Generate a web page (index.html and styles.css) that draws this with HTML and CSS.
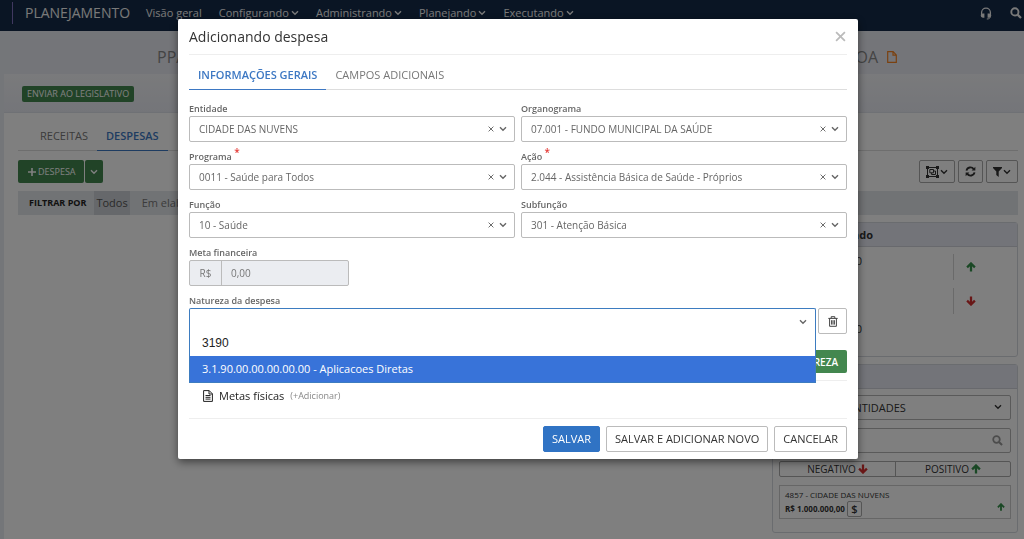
FILE: index.html
```html
<!DOCTYPE html>
<html lang="pt-BR">
<head>
<meta charset="utf-8">
<title>Planejamento</title>
<link rel="stylesheet" href="styles.css">
</head>
<body>
<svg class="sprite" aria-hidden="true">
  <symbol id="chevron" viewBox="0 0 8 6"><path d="M1 1.3 4 4.3 7 1.3" fill="none" stroke="currentColor" stroke-width="1.4"/></symbol>
  <symbol id="times" viewBox="0 0 10 10"><path d="M1 1 9 9M9 1 1 9" fill="none" stroke="currentColor" stroke-width="1.6"/></symbol>
  <symbol id="up" viewBox="0 0 10 10"><path d="M5 9.6V2M1.1 5.4 5 1.5 8.9 5.4" fill="none" stroke="currentColor" stroke-width="2.3"/></symbol>
  <symbol id="down" viewBox="0 0 10 10"><path d="M5 .4V8M1.1 4.6 5 8.5 8.9 4.6" fill="none" stroke="currentColor" stroke-width="2.3"/></symbol>
  <symbol id="search" viewBox="0 0 12 12"><circle cx="4.9" cy="4.9" r="3.6" fill="none" stroke="currentColor" stroke-width="1.9"/><path d="M7.6 7.6 11 11" stroke="currentColor" stroke-width="2.2"/></symbol>
</svg>

<header class="topbar">
  <span class="brand-edge"></span>
  <span class="product">PLANEJAMENTO</span>
  <nav class="menu">
    <a href="#">Visão geral</a>
    <a href="#">Configurando <svg class="chev"><use href="#chevron"/></svg></a>
    <a href="#">Administrando <svg class="chev"><use href="#chevron"/></svg></a>
    <a href="#">Planejando <svg class="chev"><use href="#chevron"/></svg></a>
    <a href="#">Executando <svg class="chev"><use href="#chevron"/></svg></a>
  </nav>
  <div class="top-actions">
    <button type="button" aria-label="Suporte"><svg width="12" height="13" viewBox="0 0 12 13"><path d="M1.6 8V5.6a4.4 4.4 0 0 1 8.8 0V8" fill="none" stroke="currentColor" stroke-width="1.3"/><path d="M2.8 6.5h1.6v4.2H2.8A2 2 0 0 1 2.8 6.5ZM9.2 6.5H7.6v4.2h1.6a2 2 0 0 0 0-4.2Z" fill="currentColor"/><path d="M10.2 9.8c0 1.6-1.2 2.2-3.4 2.2" fill="none" stroke="currentColor"/></svg></button>
    <button type="button" aria-label="Pesquisar"><svg width="12" height="12"><use href="#search"/></svg></button>
  </div>
</header>

<main class="page">
  <div class="plan-title">
    <span>PPA</span>
    <span class="plan-end">LOA <svg width="10" height="12" viewBox="0 0 10 12"><path d="M.7.7h5.4l3.2 3.2v7.4H.7ZM6 .7v3.4h3.3" fill="none" stroke="#f58220" stroke-width="1.2"/></svg></span>
  </div>
  <div class="plan-actions"><button type="button" class="green send">ENVIAR AO LEGISLATIVO</button></div>

  <section class="content">
    <nav class="tabs page-tabs">
      <a href="#">RECEITAS</a>
      <a href="#" class="active">DESPESAS</a>
    </nav>
    <div class="toolbar">
      <div class="split">
        <button type="button" class="green add"><svg width="8" height="8" viewBox="0 0 8 8"><path d="M4 0v8M0 4h8" stroke="currentColor" stroke-width="1.6"/></svg>DESPESA</button>
        <button type="button" class="green more" aria-label="Mais opções"><svg class="chev"><use href="#chevron"/></svg></button>
      </div>
      <div class="tools">
        <button type="button" class="tool" aria-label="Agrupar"><svg width="13" height="12" viewBox="0 0 13 12"><path d="M1.5 1.5h10v9h-10Z" fill="none" stroke="currentColor"/><path d="M0 0h3v3H0ZM10 0h3v3h-3ZM0 9h3v3H0ZM10 9h3v3h-3Z" fill="currentColor"/><path d="M3.8 3.5h3.7v3.3H3.8ZM7.5 5h2v3.5H5.6V7" fill="none" stroke="currentColor"/></svg><svg class="chev"><use href="#chevron"/></svg></button>
        <button type="button" class="tool" aria-label="Atualizar"><svg width="11" height="11" viewBox="0 0 12 12"><path d="M1.6 5A4.4 4.4 0 0 1 9.5 3.4M10.4 7A4.4 4.4 0 0 1 2.5 8.6" fill="none" stroke="currentColor" stroke-width="2"/><path d="M11.3.7v4.1H7.2ZM.7 11.3V7.2h4.1Z" fill="currentColor"/></svg></button>
        <button type="button" class="tool" aria-label="Filtrar"><svg width="9" height="10" viewBox="0 0 9 10"><path d="M0 0h9v1L5.7 4.6V10L3.3 8V4.6L0 1Z" fill="currentColor"/></svg><svg class="chev"><use href="#chevron"/></svg></button>
      </div>
    </div>
    <div class="filterbar">
      <strong>FILTRAR POR</strong>
      <a href="#" class="on">Todos</a>
      <a href="#">Em elaboração</a>
    </div>

    <aside class="side">
      <section class="panel">
        <h2><span>Planejado</span></h2>
        <div class="totals">
          <div class="total"><span>0,00</span></div>
          <div class="trend"><i><svg class="green-ink"><use href="#up"/></svg></i><i><svg class="red-ink"><use href="#down"/></svg></i></div>
          <div class="total last"><span>0,00</span></div>
        </div>
      </section>
      <section class="panel">
        <h2></h2>
        <div class="panel-body">
          <div class="pick"><select aria-label="Entidades"><option>TODAS AS ENTIDADES</option></select><svg class="chev"><use href="#chevron"/></svg></div>
          <div class="pick"><input type="search" aria-label="Pesquisar"><svg class="lens"><use href="#search"/></svg></div>
          <div class="toggle">
            <button type="button">NEGATIVO <svg class="red-ink"><use href="#down"/></svg></button>
            <button type="button">POSITIVO <svg class="green-ink"><use href="#up"/></svg></button>
          </div>
          <article class="entity">
            <div>
              <p>4857 - CIDADE DAS NUVENS</p>
              <p class="amount"><strong>R$ 1.000.000,00</strong><button type="button">$</button></p>
            </div>
            <svg class="green-ink"><use href="#up"/></svg>
          </article>
        </div>
      </section>
    </aside>
  </section>
</main>

<div class="backdrop">
  <form class="modal" role="dialog" aria-labelledby="dialog-title">
    <header class="modal-head">
      <h1 id="dialog-title">Adicionando despesa</h1>
      <button type="button" aria-label="Fechar"><svg width="11" height="11"><use href="#times"/></svg></button>
    </header>
    <nav class="tabs">
      <a href="#" class="active">INFORMAÇÕES GERAIS</a>
      <a href="#">CAMPOS ADICIONAIS</a>
    </nav>

    <div class="fields">
      <div class="field">
        <label for="entidade">Entidade</label>
        <div class="combo"><select id="entidade"><option>CIDADE DAS NUVENS</option></select><button type="button" aria-label="Limpar"><svg width="6" height="6"><use href="#times"/></svg></button><svg class="chev"><use href="#chevron"/></svg></div>
      </div>
      <div class="field">
        <label for="organograma">Organograma</label>
        <div class="combo"><select id="organograma"><option>07.001 - FUNDO MUNICIPAL DA SAÚDE</option></select><button type="button" aria-label="Limpar"><svg width="6" height="6"><use href="#times"/></svg></button><svg class="chev"><use href="#chevron"/></svg></div>
      </div>
      <div class="field">
        <label for="programa">Programa <sup>*</sup></label>
        <div class="combo"><select id="programa"><option>0011 - Saúde para Todos</option></select><button type="button" aria-label="Limpar"><svg width="6" height="6"><use href="#times"/></svg></button><svg class="chev"><use href="#chevron"/></svg></div>
      </div>
      <div class="field">
        <label for="acao">Ação <sup>*</sup></label>
        <div class="combo"><select id="acao"><option>2.044 - Assistência Básica de Saúde - Próprios</option></select><button type="button" aria-label="Limpar"><svg width="6" height="6"><use href="#times"/></svg></button><svg class="chev"><use href="#chevron"/></svg></div>
      </div>
      <div class="field">
        <label for="funcao">Função</label>
        <div class="combo"><select id="funcao"><option>10 - Saúde</option></select><button type="button" aria-label="Limpar"><svg width="6" height="6"><use href="#times"/></svg></button><svg class="chev"><use href="#chevron"/></svg></div>
      </div>
      <div class="field">
        <label for="subfuncao">Subfunção</label>
        <div class="combo"><select id="subfuncao"><option>301 - Atenção Básica</option></select><button type="button" aria-label="Limpar"><svg width="6" height="6"><use href="#times"/></svg></button><svg class="chev"><use href="#chevron"/></svg></div>
      </div>
    </div>

    <div class="field money-field">
      <label for="meta">Meta financeira</label>
      <div class="money"><span>R$</span><input id="meta" value="0,00" readonly></div>
    </div>

    <div class="field">
      <label for="natureza">Natureza da despesa</label>
      <div class="nature">
        <div class="combo open">
          <button type="button" class="closed-value" aria-label="Natureza da despesa" aria-expanded="true"></button>
          <svg class="chev"><use href="#chevron"/></svg>
          <div class="dropdown">
            <input id="natureza" value="3190">
            <ul role="listbox"><li role="option" aria-selected="true">3.1.90.00.00.00.00.00 - Aplicacoes Diretas</li></ul>
          </div>
        </div>
        <button type="button" class="trash" aria-label="Excluir"><svg width="10" height="11" viewBox="0 0 10 11"><path d="M.3 2.4h9.4M3.2 2.2V.7h3.6v1.5M1.6 2.6v7.7h6.8V2.6M3.6 4.2v4.4M5 4.2v4.4M6.4 4.2v4.4" fill="none" stroke="currentColor"/></svg></button>
      </div>
    </div>
    <div class="nature-add"><button type="button" class="green">+ NATUREZA</button></div>
    <div class="goals">
      <svg width="10" height="12" viewBox="0 0 10 12"><path d="M.6.6h5.6l3.2 3.2v7.6H.6ZM6 .6V4h3.4M2.5 5.5h5M2.5 7.3h5M2.5 9.1h5" fill="none" stroke="currentColor"/></svg>
      <span>Metas físicas</span><a href="#">(+Adicionar)</a>
    </div>
    <footer>
      <button type="submit" class="primary">SALVAR</button>
      <button type="button">SALVAR E ADICIONAR NOVO</button>
      <button type="button">CANCELAR</button>
    </footer>
  </form>
</div>
</body>
</html>
```
FILE: styles.css
```css
* { box-sizing: border-box; }
body {
  margin: 0;
  min-height: 100vh;
  background: #e8ecf2;
  color: #333;
  font: 11px/14px "Open Sans", sans-serif;
  overflow: hidden;
}
button, input, select { font: inherit; color: inherit; margin: 0; }
button {
  display: inline-flex;
  align-items: center;
  justify-content: center;
  padding: 0;
  border: 0;
  background: none;
  white-space: nowrap;
}
select { appearance: none; }
a { color: inherit; text-decoration: none; }
h1, h2, p, ul { margin: 0; padding: 0; font-weight: 400; }
.sprite { position: absolute; width: 0; height: 0; }
.chev { width: 8px; height: 6px; flex: none; }
.green { background: #43874f; color: #fff; border-radius: 2px; }
.green-ink { width: 10px; height: 10px; color: #35914a; }
.red-ink { width: 10px; height: 10px; color: #d32f2f; }

/* top bar */
.topbar {
  display: flex;
  align-items: center;
  height: 31px;
  padding: 0 2px 5px 0;
  background: #142a48;
  color: #f2f2f2;
}
.brand-edge { width: 13px; height: 22px; border-right: 1px solid #8070c0; }
.product { margin-left: 12px; font-size: 14px; }
.menu { display: flex; gap: 17px; margin-left: 16px; }
.menu a { display: flex; align-items: center; gap: 2px; }
.top-actions { display: flex; gap: 18px; margin-left: auto; }

/* page behind the dialog */
.page { padding: 8px 0 0 4px; }
.plan-title {
  display: flex;
  justify-content: space-between;
  align-items: center;
  height: 35px;
  margin-left: 6px;
  padding: 0 127px 0 147px;
  background: #e9ebf3;
  color: #888;
  font-size: 16px;
}
.plan-end { display: flex; align-items: center; gap: 9px; }
.plan-actions {
  height: 39px;
  padding: 12px 18px;
  background: linear-gradient(#f4f5f8, #e9ebf3);
  border-bottom: 1px solid #dfe2ea;
}
.send { height: 16px; padding: 0 5px; font-size: 9px; }
.content { min-height: 426px; padding: 9px 6px 6px 14px; background: #fff; }
.tabs { display: flex; border-bottom: 1px solid #ddd; color: #777; }
.tabs a { padding: 0 9px; line-height: 28px; margin-bottom: -1px; border-bottom: 1px solid transparent; }
.tabs .active { color: #3d78c3; border-color: #3d78c3; font-weight: 600; }
.page-tabs { padding-left: 13px; }
.toolbar { display: flex; justify-content: space-between; margin-top: 9px; }
.split { display: flex; gap: 1px; }
.split button { height: 23px; }
.add { gap: 2px; padding: 0 8px 0 10px; font-size: 9px; }
.more { width: 18px; }
.tools { display: flex; gap: 3px; }
.tool { height: 23px; padding: 0 6px; gap: 1px; border: 1px solid #aaa; border-radius: 2px; }
.filterbar { display: flex; align-items: center; height: 24px; margin-top: 8px; padding-left: 11px; background: #e3e6ea; color: #777; }
.filterbar strong { margin-right: 8px; font-size: 9px; color: #222; }
.filterbar a { padding: 0 12px; line-height: 24px; }
.filterbar .on { padding: 0 2px; background: #ccd0d6; color: #555; }
.side { width: 246px; margin: 7px 0 0 auto; }
.panel { border: 1px solid #d5d8df; border-radius: 3px; }
.panel + .panel { margin-top: 7px; }
.panel h2 { height: 24px; line-height: 23px; background: #e6e8f2; border-bottom: 1px solid #d0d3da; }
.panel h2 span { display: block; width: 100px; text-align: right; font-size: 11px; font-weight: 700; }
.totals { display: grid; grid-template: 68px auto / 89px 1fr; height: 109px; padding-top: 7px; }
.total { text-align: right; }
.total.last { grid-row: 2; }
.trend { grid-column: 2; grid-row: 1 / 3; display: flex; flex-direction: column; gap: 8px; width: 64px; margin-left: auto; }
.trend i { display: flex; align-items: center; height: 26px; padding-left: 12px; border-left: 1px solid #d5d5d5; }
.panel-body { display: grid; gap: 8px; padding: 6px 6px 13px; }
.pick { position: relative; height: 25px; }
.pick select, .pick input { width: 100%; height: 100%; padding: 0 13px; border: 1px solid #b5b5b5; border-radius: 2px; background: #fff; }
.pick .chev { position: absolute; right: 9px; top: 9px; }
.pick .lens { position: absolute; right: 8px; top: 7px; width: 11px; height: 11px; color: #999; }
.toggle { display: grid; grid-template-columns: 1fr 1fr; height: 16px; border: 1px solid #aaa; border-radius: 2px; font-size: 10px; }
.toggle button { gap: 2px; }
.toggle button + button { border-left: 1px solid #aaa; }
.entity { display: flex; justify-content: space-between; height: 34px; padding: 3px 5px; border: 1px solid #ccc; font-size: 8px; line-height: 12px; }
.entity > svg { width: 8px; height: 8px; align-self: center; margin-top: 9px; }
.amount { display: flex; gap: 2px; align-items: center; }
.amount button { width: 15px; height: 16px; border: 1px solid #aaa; border-radius: 2px; font-size: 11px; font-weight: 600; }

/* dialog */
.backdrop {
  position: fixed;
  inset: 0;
  display: flex;
  justify-content: center;
  align-items: flex-start;
  padding: 19px 0 0 12px;
  background: rgba(0, 0, 0, .5);
}
.modal {
  width: 680px;
  max-width: 100%;
  padding: 0 11px 7px;
  background: #fff;
  border-radius: 2px;
  box-shadow: 0 3px 9px rgba(0, 0, 0, .5);
}
.modal-head { display: flex; justify-content: space-between; align-items: center; height: 36px; padding-right: 1px; border-bottom: 1px solid #eee; }
.modal-head h1 { font-size: 14px; line-height: 20px; }
.modal-head button { color: #bbb; }
.modal .tabs { padding-top: 6px; }
.fields { display: grid; grid-template-columns: 1fr 1fr; gap: 8px 6px; margin-top: 12px; }
.field label { display: block; height: 14px; font-size: 9px; font-weight: 600; color: #666; }
.field sup { color: #e53935; font-size: 10px; line-height: 0; }
.combo { position: relative; height: 26px; color: #666; }
.combo select { width: 100%; height: 100%; padding: 0 40px 0 9px; border: 1px solid #bbb; border-radius: 2px; background: #fff; font-size: 10px; }
.combo > button { position: absolute; right: 20px; top: 9px; width: 9px; height: 8px; }
.combo > .chev { position: absolute; right: 8px; top: 10px; pointer-events: none; }
.money-field { margin: 8px 0; }
.money { display: flex; width: 160px; height: 26px; border: 1px solid #bbb; border-radius: 2px; background: #ebedf1; color: #777; font-size: 10px; line-height: 24px; }
.money span { width: 32px; text-align: center; border-right: 1px solid #bbb; }
.money input { flex: 1; min-width: 0; padding: 0 9px; border: 0; background: none; }
.nature { display: grid; grid-template-columns: 1fr 29px; gap: 2px; }
.combo.open { border: 1px solid #3d7cc0; border-bottom: 0; border-radius: 2px 2px 0 0; }
.combo.open .closed-value { position: static; width: 100%; height: 100%; }
.trash { height: 26px; border: 1px solid #bbb; border-radius: 2px; color: #444; }
.dropdown {
  position: absolute;
  top: 25px;
  left: -1px;
  right: -1px;
  z-index: 1;
  border: 1px solid #3d7cc0;
  border-top: 0;
  background: #fff;
}
.dropdown input { display: block; width: 100%; height: 22px; padding: 0 12px 4px; border: 0; background: none; color: #222; font: 12px "Liberation Sans", sans-serif; outline: 0; }
.dropdown ul { list-style: none; }
.dropdown li { padding: 0 12px; line-height: 26px; background: #3873d9; color: #fff; }
.nature-add { display: flex; justify-content: flex-end; padding: 16px 0 7px; border-bottom: 1px solid #eee; }
.nature-add button { height: 23px; padding: 0 9px; font-size: 10px; font-weight: 600; }
.goals { display: flex; align-items: center; gap: 6px; height: 38px; padding: 0 14px 7px; border-bottom: 1px solid #eee; color: #222; }
.goals a { font-size: 9px; color: #888; }
.modal footer { display: flex; justify-content: flex-end; gap: 6px; padding-top: 7px; }
.modal footer button { height: 26px; padding: 0 8px; border: 1px solid #bbb; border-radius: 2px; background: #fff; }
.modal footer .primary { background: #3073c4; border-color: #3073c4; color: #fff; }
```
